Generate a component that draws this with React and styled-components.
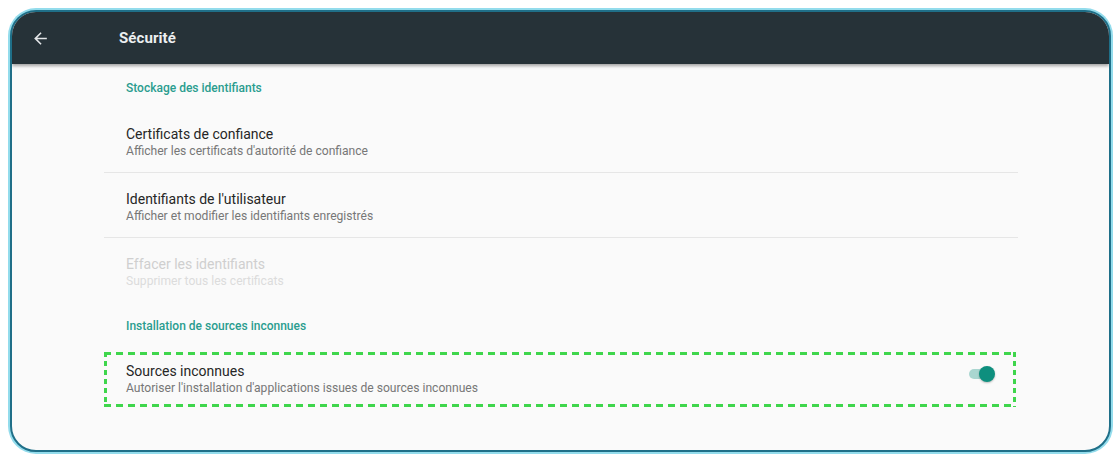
import React from 'react';
import styled, { createGlobalStyle } from 'styled-components';

const GlobalStyle = createGlobalStyle`
  html, body {
    margin: 0;
    padding: 0;
    background: #ffffff;
    font-family: Roboto, "Noto Sans", "Liberation Sans", sans-serif;
  }
`;

// Outer page spacing around the tablet frame
const Page = styled.div`
  padding: 10px 4px 4px 10px;
  height: 456px;
  box-sizing: border-box;
`;

const Frame = styled.div`
  height: 100%;
  box-sizing: border-box;
  border: 2px solid #1f6f88;
  border-radius: 26px;
  box-shadow: 0 0 0 2px #93dcec;
  background: #fafafa;
  overflow: hidden;
  display: flex;
  flex-direction: column;
`;

const Toolbar = styled.div`
  height: 52px;
  flex-shrink: 0;
  background: #263238;
  display: flex;
  align-items: center;
  box-shadow: 0 2px 3px rgba(0, 0, 0, 0.35);
  position: relative;
  z-index: 1;
`;

const BackButton = styled.div`
  width: 32px;
  margin-left: 12px;
  display: flex;
  align-items: center;
  justify-content: center;
`;

const Title = styled.div`
  margin-left: 63px;
  color: #eceff1;
  font-size: 15px;
  font-weight: 700;
  letter-spacing: 0.1px;
`;

const List = styled.div`
  margin-left: 92px;
  width: 914px;
  display: flex;
  flex-direction: column;
`;

const SectionHeader = styled.div`
  padding: 16px 0 ${(p) => p.$bottom}px 22px;
  font-size: 12px;
  line-height: 16px;
  font-weight: 500;
  color: #2a9d8f;
`;

const Item = styled.div`
  position: relative;
  box-sizing: border-box;
  padding: 17px 23px 0 22px;
  display: flex;
  align-items: flex-start;
  justify-content: space-between;
  border-bottom: ${(p) => (p.$divider ? '1px solid #e6e6e6' : 'none')};
  height: ${(p) => (p.$divider ? 65 : 64)}px;
`;

const ItemText = styled.div`
  display: flex;
  flex-direction: column;
`;

const ItemTitle = styled.div`
  font-size: 14px;
  line-height: 18px;
  color: ${(p) => (p.$disabled ? '#cfcfcf' : '#262626')};
`;

const ItemSubtitle = styled.div`
  font-size: 12.1px;
  line-height: 17px;
  color: ${(p) => (p.$disabled ? '#dcdcdc' : '#777777')};
`;

// green dashed highlight drawn over the item
const Highlight = styled.div`
  position: absolute;
  top: 7px;
  left: 0;
  right: 2px;
  bottom: 2px;
  pointer-events: none;
  background:
    linear-gradient(90deg, #3fd64c 55%, transparent 0) top left / 12px 3px repeat-x,
    linear-gradient(90deg, #3fd64c 55%, transparent 0) bottom left / 12px 3px repeat-x,
    linear-gradient(180deg, #3fd64c 55%, transparent 0) top left / 3px 9px repeat-y,
    linear-gradient(180deg, #3fd64c 55%, transparent 0) top right / 3px 9px repeat-y;
`;

const Switch = styled.div`
  position: relative;
  width: 28px;
  height: 16px;
  margin-top: 4px;
  display: flex;
  align-items: center;
`;

const Track = styled.div`
  width: 24px;
  height: 10px;
  border-radius: 5px;
  background: ${(p) => (p.$on ? '#a9d6d0' : '#bdbdbd')};
  margin-left: 2px;
`;

const Thumb = styled.div`
  position: absolute;
  top: 0;
  ${(p) => (p.$on ? 'right: 0;' : 'left: 0;')}
  width: 16px;
  height: 16px;
  border-radius: 50%;
  background: ${(p) => (p.$on ? '#0e8f7e' : '#f1f1f1')};
  box-shadow: 0 1px 2px rgba(0, 0, 0, 0.25);
`;

const ArrowBack = () => (
  <svg width="19" height="19" viewBox="0 0 24 24" fill="#e3e6e8">
    <path d="M20 11H7.83l5.59-5.59L12 4l-8 8 8 8 1.41-1.41L7.83 13H20v-2z" />
  </svg>
);

const storageItems = [
  { title: 'Certificats de confiance', subtitle: "Afficher les certificats d'autorité de confiance" },
  { title: "Identifiants de l'utilisateur", subtitle: 'Afficher et modifier les identifiants enregistrés' },
  { title: 'Effacer les identifiants', subtitle: 'Supprimer tous les certificats', disabled: true },
];

const App = () => {
  return (
    <>
      <GlobalStyle />
      <Page>
        <Frame>
          <Toolbar>
            <BackButton>
              <ArrowBack />
            </BackButton>
            <Title>Sécurité</Title>
          </Toolbar>
          <List>
            <SectionHeader $bottom={12}>Stockage des identifiants</SectionHeader>
            {storageItems.map((item, i) => (
              <Item key={item.title} $divider={i < storageItems.length - 1}>
                <ItemText>
                  <ItemTitle $disabled={item.disabled}>{item.title}</ItemTitle>
                  <ItemSubtitle $disabled={item.disabled}>{item.subtitle}</ItemSubtitle>
                </ItemText>
              </Item>
            ))}
            <SectionHeader $bottom={11}>Installation de sources inconnues</SectionHeader>
            <Item>
              <ItemText>
                <ItemTitle>Sources inconnues</ItemTitle>
                <ItemSubtitle>Autoriser l'installation d'applications issues de sources inconnues</ItemSubtitle>
              </ItemText>
              <Switch>
                <Track $on />
                <Thumb $on />
              </Switch>
              <Highlight />
            </Item>
          </List>
        </Frame>
      </Page>
    </>
  );
};

export default App;
